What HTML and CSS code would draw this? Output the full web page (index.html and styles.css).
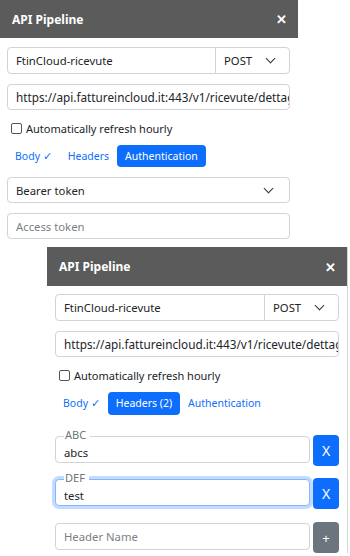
FILE: index.html
```html
<!DOCTYPE html>
<html lang="en">
<head>
  <meta charset="UTF-8">
  <meta name="viewport" content="width=device-width, initial-scale=1.0">
  <title>API Pipeline</title>
  <link rel="stylesheet" href="styles.css">
</head>
<body>
  <div class="panel">
    <header class="panel-head">
      <h1>API Pipeline</h1>
      <span class="close">✕</span>
    </header>
    <div class="panel-body">
      <div class="group">
        <div class="field grow">FtinCloud-ricevute</div>
        <div class="field method">POST <span class="chev"></span></div>
      </div>
      <div class="field url">https://api.fattureincloud.it:443/v1/ricevute/dettaglio</div>
      <label class="check"><span class="box"></span>Automatically refresh hourly</label>
      <nav class="tabs">
        <span class="tab">Body ✓</span>
        <span class="tab">Headers</span>
        <span class="tab active">Authentication</span>
      </nav>
      <div class="field select">Bearer token <span class="chev"></span></div>
      <div class="field muted">Access token</div>
    </div>
  </div>

  <div class="panel second">
    <header class="panel-head">
      <h1>API Pipeline</h1>
      <span class="close">✕</span>
    </header>
    <div class="panel-body">
      <div class="group">
        <div class="field grow">FtinCloud-ricevute</div>
        <div class="field method">POST <span class="chev"></span></div>
      </div>
      <div class="field url">https://api.fattureincloud.it:443/v1/ricevute/dettaglio</div>
      <label class="check"><span class="box"></span>Automatically refresh hourly</label>
      <nav class="tabs">
        <span class="tab">Body ✓</span>
        <span class="tab active">Headers (2)</span>
        <span class="tab">Authentication</span>
      </nav>
      <div class="header-row first">
        <div class="field float"><span class="legend">ABC</span>abcs</div>
        <button class="btn-x">X</button>
      </div>
      <div class="header-row second-row">
        <div class="field float focus"><span class="legend">DEF</span>test</div>
        <button class="btn-x">X</button>
      </div>
      <div class="header-row">
        <div class="field muted">Header Name</div>
        <button class="btn-add">+</button>
      </div>
    </div>
  </div>
</body>
</html>
```

FILE: styles.css
```css
body {
  margin: 0;
  font-family: 'Noto Sans', sans-serif;
  font-size: 11.3px;
  color: #212529;
  background: white;
  overflow: hidden;
}
.panel {
  width: 298px;
  background: white;
}
.panel.second {
  width: 300px;
  margin: -2px 0 0 47px;
  border-right: 1px solid #d6d6d6;
}
.panel-head {
  background: #5b5b5b;
  color: white;
  height: 38px;
  display: flex;
  justify-content: space-between;
  align-items: center;
  padding: 0 11px 0 12px;
}
.second .panel-head {
  height: 39px;
}
.panel-head h1 {
  margin: 0;
  font-size: 12px;
  font-weight: bold;
}
.close {
  font-size: 13px;
  font-weight: bold;
}
.panel-body {
  padding: 9px 8px 0 7px;
  display: flex;
  flex-direction: column;
}
.second .panel-body {
  padding: 8px 8px 0 8px;
}
.field {
  height: 26px;
  box-sizing: border-box;
  border: 1px solid #ced4da;
  border-radius: 4px;
  padding: 0 8px;
  display: flex;
  align-items: center;
  white-space: nowrap;
  overflow: hidden;
  background: white;
  margin-bottom: 10px;
}
.url {
  font-size: 11.75px;
}
.group {
  display: flex;
  height: 27px;
  margin-bottom: 10px;
}
.group .field {
  height: 27px;
  margin: 0;
}
.grow {
  flex: 1;
  border-radius: 4px 0 0 4px;
}
.method {
  width: 75px;
  margin-left: -1px !important;
  border-radius: 0 4px 4px 0;
  justify-content: space-between;
  padding-right: 15px;
}
.chev {
  width: 6px;
  height: 6px;
  border-right: 1.6px solid #333;
  border-bottom: 1.6px solid #333;
  transform: rotate(45deg);
  margin-top: -4px;
}
.select {
  justify-content: space-between;
  padding-right: 17px;
}
.muted {
  color: #7a7f85;
}
.check {
  display: flex;
  align-items: center;
  height: 18px;
  margin: -1px 0 8px 4px;
  font-size: 11px;
}
.box {
  width: 9px;
  height: 9px;
  border: 1px solid #555;
  border-radius: 2px;
  margin-right: 4px;
}
.tabs {
  display: flex;
  margin: 0 0 10px 0;
  font-size: 10.5px;
}
.tab {
  color: #0d6efd;
  padding: 0 8px;
  height: 22px;
  line-height: 22px;
  border-radius: 4px;
}
.tab.active {
  background: #0d6efd;
  color: white;
}
.second .tabs {
  margin-bottom: 0;
  height: 23px;
}
.second .tab {
  height: 23px;
  line-height: 23px;
}
.header-row {
  display: flex;
  gap: 3px;
  margin-top: 13px;
}
.header-row.first {
  margin-top: 20px;
}
.header-row.second-row {
  margin-top: 12px;
}
.header-row .field {
  flex: 1;
  height: 27px;
  margin: 1px 0 0 0;
  position: relative;
  overflow: visible;
}
.legend {
  position: absolute;
  left: 8px;
  top: -9px;
  background: white;
  padding: 0 4px 0 1px;
  color: #6c757d;
  font-size: 11px;
  line-height: 14px;
}
.float {
  padding-top: 5px;
}
.focus {
  border-color: #86b7fe;
  box-shadow: 0 0 0 3px rgba(13, 110, 253, 0.25);
}
.btn-x, .btn-add {
  width: 26px;
  height: 31px;
  border: none;
  border-radius: 4px;
  color: white;
  font-family: 'Noto Sans', sans-serif;
  font-size: 14px;
  background: #0d6efd;
  padding: 0;
}
.btn-add {
  background: #6c757d;
  font-size: 13px;
}
```
